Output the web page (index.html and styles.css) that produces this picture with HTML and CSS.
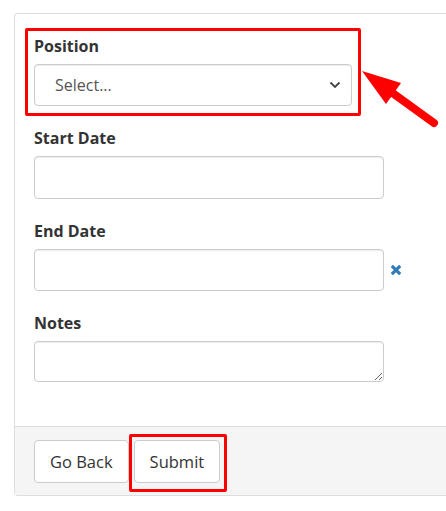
FILE: index.html
```html
<!DOCTYPE html>
<html>
<head>
<meta charset="utf-8">
<link rel="stylesheet" href="styles.css">
</head>
<body>
<div class="page">
  <div class="panel">
    <div class="panel-body">
      <div class="group group-narrow highlight-pos">
        <label class="label">Position</label>
        <div class="select control"><span>Select...</span>
          <svg class="chevron" width="12" height="8" viewBox="0 0 12 8"><path d="M1.5 1.5 L6 6 L10.5 1.5" fill="none" stroke="#444" stroke-width="1.8"/></svg>
        </div>
      </div>
      <div class="group">
        <label class="label">Start Date</label>
        <input class="control input-tall" type="text">
      </div>
      <div class="group">
        <label class="label">End Date</label>
        <div class="with-clear">
          <input class="control" type="text">
          <svg class="clear" width="12" height="12" viewBox="0 0 12 12"><path d="M1.8 1.8 L10.2 10.2 M10.2 1.8 L1.8 10.2" stroke="#337ab7" stroke-width="3.2" stroke-linecap="butt"/></svg>
        </div>
      </div>
      <div class="group">
        <label class="label">Notes</label>
        <textarea class="control notes"></textarea>
      </div>
    </div>
    <div class="panel-footer">
      <button class="btn" type="button">Go Back</button>
      <span class="highlight-submit"><button class="btn" type="button">Submit</button></span>
    </div>
  </div>
</div>
<svg class="arrow" width="90" height="70" viewBox="0 0 90 70">
  <line x1="72" y1="52" x2="25" y2="18" stroke="#ff0000" stroke-width="8" stroke-linecap="round"/>
  <polygon points="0,0 39,12 24,33" fill="#ff0000"/>
</svg>
</body>
</html>
```

FILE: styles.css
```css
body {
  margin: 0;
  font-family: "Open Sans", "Noto Sans", sans-serif;
  color: #333;
  overflow: hidden;
  position: relative;
  background: #fff;
}

.page {
  padding: 13px 0 0 14px;
}

.panel {
  border: 1px solid #ddd;
  border-right: none;
  border-radius: 4px 0 0 4px;
}

.panel-body {
  padding: 20px 20px 24px 19px;
}

.group {
  margin-bottom: 20px;
  width: 350px;
}

.group-narrow {
  width: 318px;
}

.label {
  display: block;
  font-weight: 700;
  font-size: 16px;
  line-height: 24px;
  margin-bottom: 6px;
  color: #333;
}

.control {
  display: block;
  box-sizing: border-box;
  width: 350px;
  height: 42px;
  border: 1px solid #ccc;
  border-radius: 4px;
  background: #fff;
  box-shadow: inset 0 1px 1px rgba(0, 0, 0, 0.075);
  font-family: inherit;
  font-size: 16px;
  margin: 0;
}

.input-tall {
  height: 43px;
}

.select {
  width: 318px;
  display: flex;
  align-items: center;
  justify-content: space-between;
  padding: 0 10px 0 20px;
  color: #555;
}

.chevron {
  display: block;
}

.with-clear {
  display: flex;
  align-items: center;
  gap: 6px;
  width: 380px;
}

.clear {
  flex: none;
}

.notes {
  height: 41px;
  resize: vertical;
}

.panel-footer {
  background: #f5f5f5;
  border-top: 1px solid #ddd;
  padding: 13px 19px 12px;
  display: flex;
  gap: 5px;
  align-items: center;
}

.btn {
  height: 43px;
  padding: 0 15px;
  border: 1px solid #ccc;
  border-radius: 4px;
  background: #fff;
  font-family: inherit;
  font-size: 16.5px;
  color: #333;
  display: block;
}

.highlight-pos {
  position: relative;
}

.highlight-pos::after {
  content: "";
  position: absolute;
  top: -6px;
  left: -9px;
  right: -9px;
  bottom: -10px;
  border: 3px solid #ff0000;
  border-radius: 2px;
}

.highlight-submit {
  position: relative;
  display: block;
}

.highlight-submit::after {
  content: "";
  position: absolute;
  top: -6px;
  left: -5px;
  right: -7px;
  bottom: -9px;
  border: 3px solid #ff0000;
  border-radius: 2px;
}

.arrow {
  position: absolute;
  left: 362px;
  top: 71px;
}
```
